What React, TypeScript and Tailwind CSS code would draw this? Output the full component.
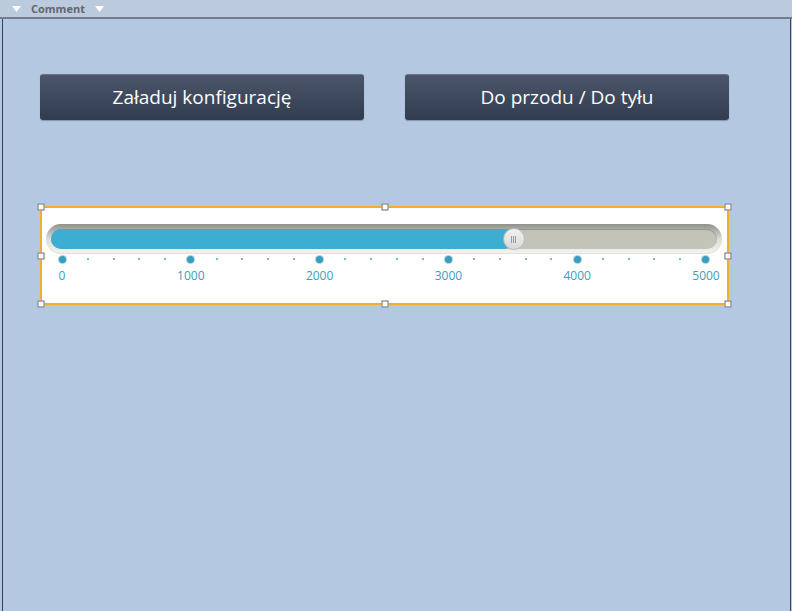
import React from "react";

const MAX = 5000;
const value = 3500;

// little white squares drawn on the selection frame
function Handle({ className }: { className: string }) {
  return (
    <div
      className={`absolute h-[7px] w-[7px] bg-white border border-[#6b6b6b] -translate-x-1/2 -translate-y-1/2 ${className}`}
    />
  );
}

function Caret() {
  return (
    <svg width="9" height="6" viewBox="0 0 9 6" className="shrink-0">
      <path d="M0 0 H9 L4.5 6 Z" fill="#ffffff" />
    </svg>
  );
}

function ActionButton({ label }: { label: string }) {
  return (
    <button className="w-[324px] h-[46px] rounded-[3px] bg-gradient-to-b from-[#4c566a] to-[#323c50] border-t border-[#6a7488] shadow-[0_1px_1px_rgba(0,0,0,0.25)] text-white text-[19px] font-medium font-['Open_Sans',sans-serif]">
      {label}
    </button>
  );
}

function Slider() {
  const pct = value / MAX;
  const ticks = Array.from({ length: 26 }, (_, i) => i);
  const labels = [0, 1000, 2000, 3000, 4000, 5000];

  return (
    <div className="relative w-[689px] h-[99px] bg-white border-2 border-[#f7ac2e]">
      <Handle className="left-[-1px] top-[-1px]" />
      <Handle className="left-1/2 top-[-1px]" />
      <Handle className="left-[calc(100%+1px)] top-[-1px]" />
      <Handle className="left-[-1px] top-1/2" />
      <Handle className="left-[calc(100%+1px)] top-1/2" />
      <Handle className="left-[-1px] top-[calc(100%+1px)]" />
      <Handle className="left-1/2 top-[calc(100%+1px)]" />
      <Handle className="left-[calc(100%+1px)] top-[calc(100%+1px)]" />

      <div className="pl-[4px] pr-[5px] pt-[16px]">
        {/* track frame */}
        <div className="h-[30px] rounded-full bg-gradient-to-b from-[#8e918c] via-[#dcddd8] to-[#f4f5f1] p-[5px] shadow-[inset_0_-1px_0_#e0e1dc]">
          <div className="relative h-[20px] rounded-full bg-[#c3c3b8] shadow-[inset_0_1px_1px_rgba(0,0,0,0.25)]">
            <div
              className="h-full rounded-full bg-[#3dadd2]"
              style={{ width: `calc(9px + (100% - 18px) * ${pct})` }}
            />
            <div
              className="absolute top-1/2 -translate-x-1/2 -translate-y-1/2 w-[22px] h-[22px] rounded-full bg-gradient-to-b from-[#f2f2f2] to-[#d9d9d9] border border-[#b9b9b9] flex items-center justify-center gap-[1px]"
              style={{ left: `calc(9px + (100% - 18px) * ${pct})` }}
            >
              <span className="w-px h-[7px] bg-[#9a9a9a]" />
              <span className="w-px h-[7px] bg-[#9a9a9a]" />
              <span className="w-px h-[7px] bg-[#9a9a9a]" />
            </div>
          </div>
        </div>

        {/* ticks and scale labels */}
        <div className="px-[16px]">
          <div className="flex justify-between h-[10px] items-center">
            {ticks.map((i) => (
              <div key={i} className="w-0 flex justify-center">
                {i % 5 === 0 ? (
                  <span className="shrink-0 w-[7px] h-[7px] rounded-full bg-[#3a9cc0] shadow-[0_0_0_1px_#a9d6e6]" />
                ) : (
                  <span className="shrink-0 w-[2px] h-[2px] rounded-full bg-[#4aa6c8]" />
                )}
              </div>
            ))}
          </div>
          <div className="flex justify-between mt-[4px]">
            {labels.map((l) => (
              <div key={l} className="w-0 flex justify-center">
                <span className="shrink-0 text-[12px] leading-[16px] text-[#3b9dc0] font-['Open_Sans',sans-serif]">
                  {l}
                </span>
              </div>
            ))}
          </div>
        </div>
      </div>
    </div>
  );
}

export default function App() {
  return (
    <div className="w-[792px] h-[611px] bg-[#b5c8e3] flex flex-col overflow-hidden">
      <div className="h-[19px] shrink-0 bg-[#bccadd] border-b-2 border-[#737d8c] flex items-center pl-[12px] gap-[10px]">
        <Caret />
        <span className="text-[11px] font-bold text-[#5f6670] font-['Open_Sans',sans-serif] leading-none">
          Comment
        </span>
        <Caret />
      </div>
      <div className="flex-1 ml-[2px] mr-[1px] border-l border-r border-[#3c4250] bg-[#b4c8e2] pl-[37px] pt-[55px]">
        <div className="flex gap-[41px]">
          <ActionButton label="Załaduj konfigurację" />
          <ActionButton label="Do przodu / Do tyłu" />
        </div>
        <div className="mt-[86px]">
          <Slider />
        </div>
      </div>
    </div>
  );
}
